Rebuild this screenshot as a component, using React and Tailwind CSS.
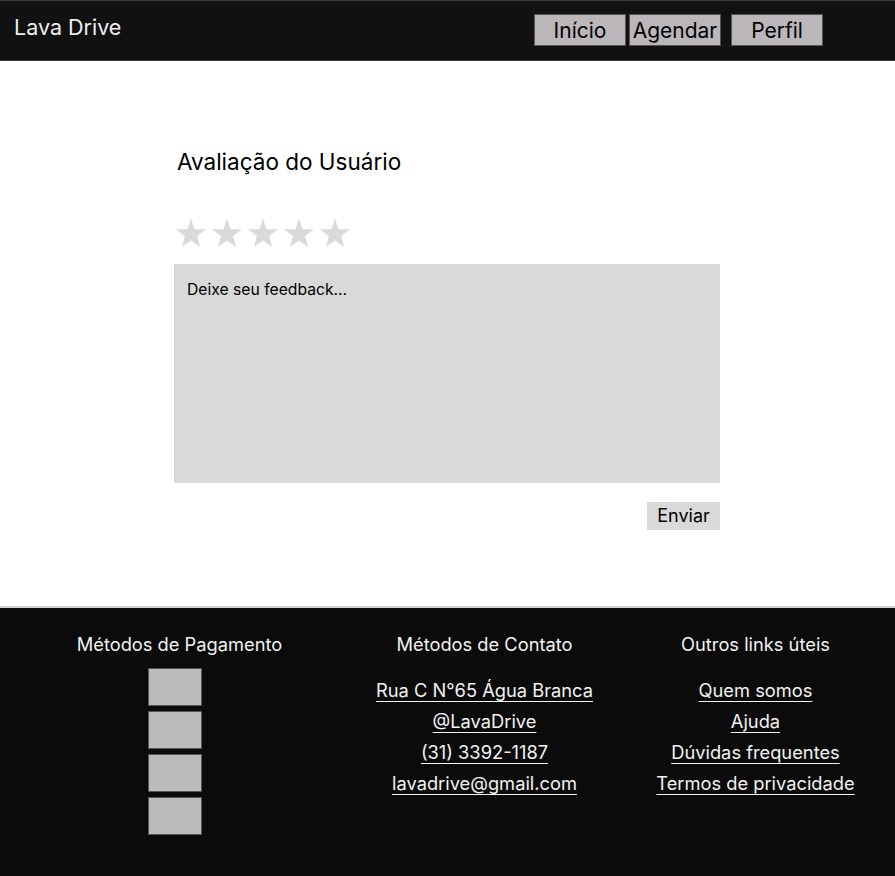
import { useState } from 'react'

const CONTACT = ['Rua C N°65 Água Branca', '@LavaDrive', '(31) 3392-1187', 'lavadrive@gmail.com']
const LINKS = ['Quem somos', 'Ajuda', 'Dúvidas frequentes', 'Termos de privacidade']

function Star() {
  return (
    <svg width="32" height="30" viewBox="0 0 24 23" className="fill-[#d9d9d9]">
      <polygon points="12,0.5 14.8,8.6 23.4,8.7 16.6,13.9 19.1,22.2 12,17.2 4.9,22.2 7.4,13.9 0.6,8.7 9.2,8.6" />
    </svg>
  )
}

export default function App() {
  const [feedback, setFeedback] = useState('')

  return (
    <div className="min-h-screen bg-white flex flex-col font-['Inter',sans-serif]">
      {/* Top bar */}
      <header className="h-[61px] bg-[#111111] border-t border-b border-[#3c3c3c] flex items-center justify-between pl-[14px] pr-[72px]">
        <span className="text-[21.5px] text-[#f0eeee] mb-[6px]">Lava Drive</span>
        <nav className="flex items-center mt-[-1px]">
          <button className="w-[92px] h-[32px] bg-[#bab6b9] border border-[#555] text-[21px] leading-none text-black">Início</button>
          <button className="w-[92px] h-[32px] ml-[3px] bg-[#bab6b9] border border-[#555] text-[21px] leading-none text-black">Agendar</button>
          <button className="w-[92px] h-[32px] ml-[10px] bg-[#bab6b9] border border-[#555] text-[21px] leading-none text-black">Perfil</button>
        </nav>
      </header>

      {/* Content */}
      <main className="h-[545px] pt-[84px]">
        <div className="w-[546px] ml-[174px]">
          <h1 className="text-[22.5px] text-black pl-[3px]">Avaliação do Usuário</h1>
          <div className="flex gap-[4px] mt-[39px] pl-[1px]">
            {[0, 1, 2, 3, 4].map((i) => (
              <Star key={i} />
            ))}
          </div>
          <textarea
            value={feedback}
            onChange={(e) => setFeedback(e.target.value)}
            placeholder="Deixe seu feedback..."
            className="block w-full h-[219px] mt-[16px] bg-[#d9d9d9] px-[13px] py-[14px] text-[15.7px] text-black placeholder:text-black resize-none outline-none"
          />
          <div className="flex justify-end mt-[19px]">
            <button className="w-[73px] h-[28px] bg-[#d9d9d9] text-[18px] text-black">Enviar</button>
          </div>
        </div>
      </main>

      {/* Footer */}
      <footer className="flex-1 bg-[#0b0b0b] border-t-2 border-[#d0d0d0] flex pt-[23px] pb-[40px] text-[#f2f2f2]">
        <div className="w-[359px] shrink-0 flex flex-col items-center">
          <h3 className="text-[18.3px]">Métodos de Pagamento</h3>
          <div className="flex flex-col gap-[5px] mt-[10px] mr-[10px]">
            {[0, 1, 2, 3].map((i) => (
              <div key={i} className="w-[54px] h-[38px] bg-[#bbbbbb] border border-[#555]" />
            ))}
          </div>
        </div>
        <div className="w-[251px] shrink-0 flex flex-col items-center">
          <h3 className="text-[18.3px]">Métodos de Contato</h3>
          <ul className="flex flex-col items-center mt-[19px] gap-[5px]">
            {CONTACT.map((c) => (
              <li key={c}>
                <a href="#" className="text-[18.3px] leading-[26px] underline underline-offset-[4px]">{c}</a>
              </li>
            ))}
          </ul>
        </div>
        <div className="flex-1 pl-[6px] flex flex-col items-center">
          <h3 className="text-[18.3px]">Outros links úteis</h3>
          <ul className="flex flex-col items-center mt-[19px] gap-[5px]">
            {LINKS.map((l) => (
              <li key={l}>
                <a href="#" className="text-[18.3px] leading-[26px] underline underline-offset-[4px]">{l}</a>
              </li>
            ))}
          </ul>
        </div>
      </footer>
    </div>
  )
}
